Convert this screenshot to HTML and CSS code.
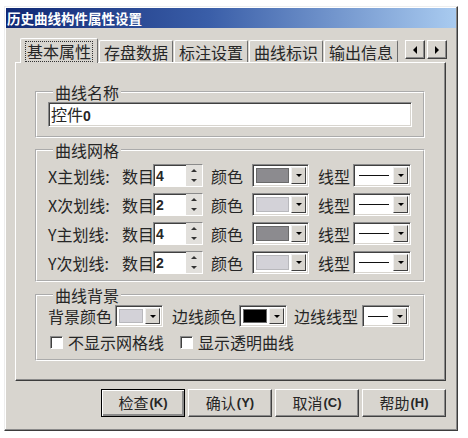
FILE: index.html
```html
<!DOCTYPE html>
<html lang="zh-CN">
<head>
  <meta charset="UTF-8">
  <title>历史曲线构件属性设置</title>
  <link rel="stylesheet" href="styles.css">
</head>
<body>

  <div class="dialog">
    <div class="titlebar">历史曲线构件属性设置</div>

    <div class="body">
      <div class="tabs">
        <div class="tab active"><span class="focus">基本属性</span></div>
        <div class="tab">存盘数据</div>
        <div class="tab">标注设置</div>
        <div class="tab">曲线标识</div>
        <div class="tab">输出信息</div>
        <div class="tab-arrows">
          <span class="arrow-btn"><i class="tri-left"></i></span>
          <span class="arrow-btn"><i class="tri-right"></i></span>
        </div>
      </div>

      <div class="panel">
        <fieldset class="group g-name">
          <legend>曲线名称</legend>
          <div class="textbox">控件<b>0</b></div>
        </fieldset>

        <fieldset class="group g-grid">
          <legend>曲线网格</legend>

          <div class="row">
            <span class="row-label">X主划线:</span>
            <span>数目</span>
            <div class="spin"><span class="spin-value">4</span><span class="spin-btns"><i class="up"></i><i class="down"></i></span></div>
            <span class="lbl-color">颜色</span>
            <div class="combo color-combo"><span class="swatch dark"></span><span class="drop"><i></i></span></div>
            <span class="lbl-type">线型</span>
            <div class="combo line-combo"><span class="line"></span><span class="drop"><i></i></span></div>
          </div>

          <div class="row">
            <span class="row-label">X次划线:</span>
            <span>数目</span>
            <div class="spin"><span class="spin-value">2</span><span class="spin-btns"><i class="up"></i><i class="down"></i></span></div>
            <span class="lbl-color">颜色</span>
            <div class="combo color-combo"><span class="swatch light"></span><span class="drop"><i></i></span></div>
            <span class="lbl-type">线型</span>
            <div class="combo line-combo"><span class="line"></span><span class="drop"><i></i></span></div>
          </div>

          <div class="row">
            <span class="row-label">Y主划线:</span>
            <span>数目</span>
            <div class="spin"><span class="spin-value">4</span><span class="spin-btns"><i class="up"></i><i class="down"></i></span></div>
            <span class="lbl-color">颜色</span>
            <div class="combo color-combo"><span class="swatch dark"></span><span class="drop"><i></i></span></div>
            <span class="lbl-type">线型</span>
            <div class="combo line-combo"><span class="line"></span><span class="drop"><i></i></span></div>
          </div>

          <div class="row">
            <span class="row-label">Y次划线:</span>
            <span>数目</span>
            <div class="spin"><span class="spin-value">2</span><span class="spin-btns"><i class="up"></i><i class="down"></i></span></div>
            <span class="lbl-color">颜色</span>
            <div class="combo color-combo"><span class="swatch light"></span><span class="drop"><i></i></span></div>
            <span class="lbl-type">线型</span>
            <div class="combo line-combo"><span class="line"></span><span class="drop"><i></i></span></div>
          </div>
        </fieldset>

        <fieldset class="group g-bg">
          <legend>曲线背景</legend>

          <div class="row bg-row">
            <span>背景颜色</span>
            <div class="combo small-combo c1"><span class="swatch light"></span><span class="drop"><i></i></span></div>
            <span class="lbl-border">边线颜色</span>
            <div class="combo small-combo c2"><span class="swatch black"></span><span class="drop"><i></i></span></div>
            <span class="lbl-btype">边线线型</span>
            <div class="combo small-combo c3 line-combo"><span class="line"></span><span class="drop"><i></i></span></div>
          </div>

          <div class="check-row">
            <span class="checkbox first"></span>
            <span class="check-text">不显示网格线</span>
            <span class="checkbox second"></span>
            <span class="check-text">显示透明曲线</span>
          </div>
        </fieldset>
      </div>

      <div class="buttons">
        <div class="btn default">检查<span class="key">(K)</span></div>
        <div class="btn">确认<span class="key">(Y)</span></div>
        <div class="btn">取消<span class="key">(C)</span></div>
        <div class="btn">帮助<span class="key">(H)</span></div>
      </div>
    </div>
  </div>

</body>
</html>
```

FILE: styles.css
```css
body {
  margin: 0;
  background-color: #ffffff;
  font-family: "Noto Sans CJK SC", "Liberation Sans", sans-serif;
  font-size: 16px;
  line-height: 18px;
  color: #262626;
}

.dialog {
  margin: 6px 0 0 4px;
  width: 454px;
  height: 425px;
  box-sizing: border-box;
  padding: 1px;
  background-color: #d8d5cf;
  border: 1px solid;
  border-color: #eeeeee #3c3c3c #3c3c3c #eeeeee;
  box-shadow: inset -1px -1px 0 #8a8a8a, inset 1px 1px 0 #ffffff;
}

.titlebar {
  height: 20px;
  line-height: 20px;
  padding-left: 1px;
  background: linear-gradient(to right, #102874 0%, #3a5ea8 45%, #a9cbf0 100%);
  color: #ffffff;
  font-size: 13.5px;
  font-weight: bold;
}

.body {
  padding: 10px 10px 0 9px;
}

/* tab strip */
.tabs {
  display: flex;
  align-items: flex-end;
  height: 24px;
  padding-left: 5px;
}

.tab {
  height: 22px;
  box-sizing: border-box;
  padding: 2px 4px 0 4px;
  border-top: 1px solid #ffffff;
  border-left: 1px solid #ffffff;
  border-right: 1px solid #6e6e6e;
  border-radius: 2px 2px 0 0;
  white-space: nowrap;
}

.tab + .tab {
  margin-left: 1px;
}

.tab.active {
  height: 25px;
  margin-bottom: -1px;
  padding: 3px 5px 0 5px;
  background-color: #d8d5cf;
  position: relative;
  z-index: 1;
}

.focus {
  display: inline-block;
  outline: 1px dotted #333333;
  padding: 0 1px;
  line-height: 19px;
}

.tab-arrows {
  display: flex;
  align-self: flex-start;
  margin: 2px -1px 0 auto;
}

.arrow-btn {
  width: 20px;
  height: 19px;
  box-sizing: border-box;
  display: flex;
  align-items: center;
  justify-content: center;
  border: 1px solid;
  border-color: #ffffff #404040 #404040 #ffffff;
  box-shadow: inset -1px -1px 0 #8a8a8a;
}

.arrow-btn + .arrow-btn {
  margin-left: 2px;
}

.tri-left, .tri-right {
  width: 0;
  height: 0;
  border-top: 4px solid transparent;
  border-bottom: 4px solid transparent;
}

.tri-left {
  border-right: 4px solid #000000;
}

.tri-right {
  border-left: 4px solid #000000;
}

/* tab page */
.panel {
  height: 319px;
  box-sizing: border-box;
  padding: 20px 0 0 19px;
  border: 1px solid;
  border-color: #ffffff #3c3c3c #3c3c3c #ffffff;
  box-shadow: inset -1px -1px 0 #8a8a8a;
}

.group {
  width: 390px;
  box-sizing: border-box;
  margin: 0;
  border: 2px groove #ffffff;
  padding: 1px 11px 9px 11px;
}

.group legend {
  margin-left: 5px;
  padding: 0 2px;
  line-height: 18px;
}

.g-grid {
  margin-top: 3px;
  padding-top: 5px;
  padding-bottom: 6px;
}

.g-bg {
  margin-top: 4px;
  padding-top: 1px;
  padding-bottom: 8px;
}

.textbox {
  height: 25px;
  box-sizing: border-box;
  padding: 2px 0 0 2px;
  background-color: #ffffff;
  border: 1px solid;
  border-color: #8a8a8a #ffffff #ffffff #8a8a8a;
  box-shadow: inset 1px 1px 0 #404040, inset -1px -1px 0 #d8d5cf;
}

.textbox b {
  font-family: "Liberation Sans", sans-serif;
  font-size: 14px;
}

/* rows of controls */
.row {
  display: flex;
  align-items: center;
  height: 23px;
}

.row + .row {
  margin-top: 6px;
}

.row-label {
  width: 74px;
}

.spin {
  display: flex;
  width: 50px;
  height: 23px;
  box-sizing: border-box;
  margin-left: -1px;
  background-color: #ffffff;
  border: 1px solid;
  border-color: #8a8a8a #ffffff #ffffff #8a8a8a;
  box-shadow: inset 1px 1px 0 #404040;
}

.spin-value {
  flex: 1;
  padding: 2px 0 0 2px;
  font-family: "Liberation Sans", sans-serif;
  font-size: 14px;
  font-weight: bold;
}

.spin-btns {
  width: 15px;
  display: flex;
  flex-direction: column;
  background-color: #e2e0dc;
  padding: 1px 1px 1px 0;
}

.spin-btns i {
  flex: 1;
  display: flex;
  align-items: center;
  justify-content: center;
}

.spin-btns i::after {
  content: "";
  width: 0;
  height: 0;
  border-left: 3px solid transparent;
  border-right: 3px solid transparent;
}

.spin-btns .up::after {
  border-bottom: 3px solid #333333;
}

.spin-btns .down::after {
  border-top: 3px solid #333333;
}

.lbl-color {
  margin-left: 8px;
}

.lbl-type {
  margin-left: 9px;
}

.combo {
  display: flex;
  height: 23px;
  box-sizing: border-box;
  padding: 2px;
  background-color: #ffffff;
  border: 1px solid;
  border-color: #8a8a8a #ffffff #ffffff #8a8a8a;
  box-shadow: inset 1px 1px 0 #404040, inset -1px -1px 0 #d8d5cf;
}

.color-combo {
  width: 57px;
  margin-left: 9px;
}

.line-combo {
  width: 58px;
  margin-left: 3px;
}

.swatch {
  flex: 1;
  margin: 1px 2px 1px 1px;
  border: 1px solid #6a6a6a;
}

.swatch.dark {
  background-color: #8c8b8f;
}

.swatch.light {
  background-color: #d3d2d8;
  border-color: #b8b8bc;
}

.swatch.black {
  background-color: #000000;
}

.line {
  flex: 1;
  margin: 0 4px 0 3px;
  align-self: center;
  border-top: 1px solid #111111;
}

.drop {
  width: 15px;
  display: flex;
  align-items: center;
  justify-content: center;
  box-sizing: border-box;
  background-color: #d8d5cf;
  border: 1px solid;
  border-color: #f0f0f0 #404040 #404040 #f0f0f0;
}

.drop i {
  width: 0;
  height: 0;
  border-left: 3px solid transparent;
  border-right: 3px solid transparent;
  border-top: 3px solid #000000;
}

.bg-row {
  height: 22px;
}

.bg-row .combo {
  height: 22px;
}

.small-combo {
  width: 48px;
}

.c1 {
  margin-left: 3px;
}

.lbl-border {
  margin-left: 9px;
}

.c2 {
  margin-left: 3px;
}

.lbl-btype {
  margin-left: 7px;
}

.c3 {
  margin-left: 4px;
}

.check-row {
  display: flex;
  align-items: center;
  height: 18px;
  margin-top: 6px;
}

.checkbox {
  width: 13px;
  height: 13px;
  box-sizing: border-box;
  background-color: #ffffff;
  border: 1px solid;
  border-color: #8a8a8a #ffffff #ffffff #8a8a8a;
  box-shadow: inset 1px 1px 0 #404040;
}

.checkbox.first {
  margin-left: 2px;
}

.checkbox.second {
  margin-left: 16px;
}

.check-text {
  margin-left: 5px;
}

/* dialog buttons */
.buttons {
  display: flex;
  justify-content: flex-end;
  gap: 3px;
  margin-top: 8px;
}

.btn {
  width: 84px;
  height: 28px;
  box-sizing: border-box;
  display: flex;
  align-items: center;
  justify-content: center;
  font-size: 15px;
  border: 1px solid;
  border-color: #ffffff #404040 #404040 #ffffff;
  box-shadow: inset -1px -1px 0 #8a8a8a;
}

.btn.default {
  border: 1px solid #000000;
  box-shadow: inset 1px 1px 0 #ffffff, inset -2px -2px 0 #8a8a8a;
}

.key {
  font-family: "Liberation Sans", sans-serif;
  font-size: 13px;
  font-weight: bold;
  margin-left: 1px;
}
```
